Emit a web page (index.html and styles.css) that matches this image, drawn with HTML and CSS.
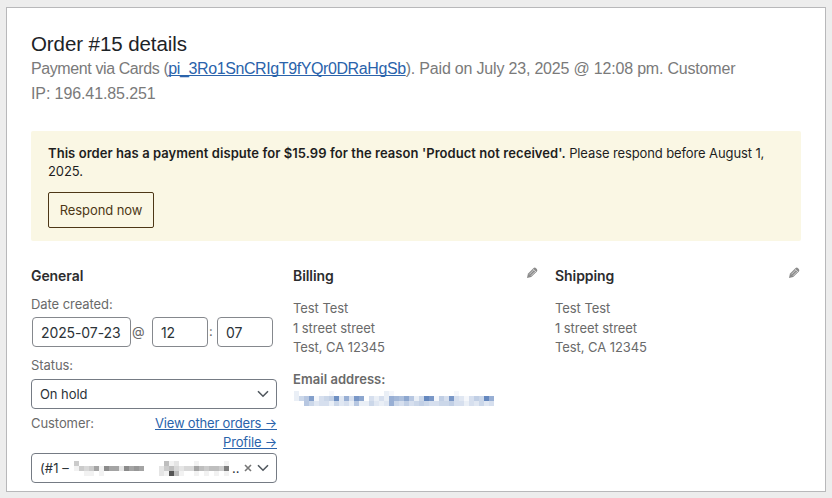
FILE: index.html
```
<!DOCTYPE html>
<html lang="en">
<head>
    <meta charset="UTF-8">
    <meta name="viewport" content="width=device-width, initial-scale=1.0">
    <title>Order #15 details</title>
    <link rel="stylesheet" href="styles.css">
</head>
<body>
<div class="panel">
    <h2 class="order-title">Order #15 details</h2>
    <p class="order-meta"><span class="meta-line">Payment via Cards (<a href="#">pi_3Ro1SnCRIgT9fYQr0DRaHgSb</a><span class="meta-paid">). Paid on July 23, 2025 @ 12:08 pm. Customer</span></span> <span class="meta-ip">IP: 196.41.85.251</span></p>

    <div class="notice">
        <p><strong>This order has a payment dispute for $15.99 for the reason 'Product not received'.</strong> Please respond before August 1, 2025.</p>
        <button type="button" class="respond">Respond now</button>
    </div>

    <div class="columns">
        <div class="column">
            <h3>General</h3>
            <div class="label date-label">Date created:</div>
            <div class="date-row">
                <input type="text" class="date" value="2025-07-23"><span class="at">@</span>
                <input type="text" class="time" value="12"><span class="colon">:</span>
                <input type="text" class="time" value="07">
            </div>
            <div class="label status-label">Status:</div>
            <div class="select">
                <span>On hold</span>
                <svg class="chevron" viewBox="0 0 12 8"><path d="M1 1.2l5 5 5-5"/></svg>
            </div>
            <div class="customer-row">
                <span class="label">Customer:</span>
                <span class="links"><a href="#">View other orders →</a><a href="#">Profile →</a></span>
            </div>
            <div class="select customer">
                <span class="customer-id">(#1 –</span>
                <span class="mosaic" data-color="60,60,60" data-rows="4000000000000000005120001000001 143471977297870002453233754554a 0011010000000000021d51001010101"></span>
                <span class="dots">..</span>
                <svg class="clear" viewBox="0 0 8 8"><path d="M1 1l6 6M7 1L1 7"/></svg>
                <svg class="chevron" viewBox="0 0 12 8"><path d="M1 1.2l5 5 5-5"/></svg>
            </div>
        </div>

        <div class="column">
            <div class="column-head">
                <h3>Billing</h3>
                <svg class="pencil" viewBox="0 0 12 12"><path d="M1 11l.9-4.2L7.6 1.1Q8.8.1 10 1.2l.8.8q1.1 1.2.1 2.4L5.2 10.1z"/><path class="groove" d="M3.3 7.4l4.4-4.4M4.9 8.8l4.4-4.4M7.2 2.1l2.9 2.9"/></svg>
            </div>
            <p class="address">Test Test<br>1 street street<br>Test, CA 12345</p>
            <div class="label email-label">Email address:</div>
            <div class="mosaic email" data-color="100,135,190" data-rows="2000000100000000002100000000000010000000 257c1456e3a4db04242a98b725fd164d431465fa 0075344253427225323a54645654455644243534"></div>
        </div>

        <div class="column">
            <div class="column-head">
                <h3>Shipping</h3>
                <svg class="pencil" viewBox="0 0 12 12"><path d="M1 11l.9-4.2L7.6 1.1Q8.8.1 10 1.2l.8.8q1.1 1.2.1 2.4L5.2 10.1z"/><path class="groove" d="M3.3 7.4l4.4-4.4M4.9 8.8l4.4-4.4M7.2 2.1l2.9 2.9"/></svg>
            </div>
            <p class="address">Test Test<br>1 street street<br>Test, CA 12345</p>
        </div>
    </div>
</div>
<script src="mosaic.js"></script>
</body>
</html>
```
FILE: styles.css
```
* {
    box-sizing: border-box;
}

body {
    margin: 0;
    padding: 7px 6px 6px;
    height: 498px;
    overflow: hidden;
    background-color: #ededed;
    font-family: Inter, sans-serif;
    font-size: 13px;
    letter-spacing: -0.07px;
    color: #6a6a6a;
}

h2, h3, p {
    margin: 0;
}

a {
    color: #2a63ab;
    text-decoration: underline;
}

.panel {
    width: 820px;
    height: 485px;
    padding: 23px 24px 0;
    background-color: #fff;
    border: 1px solid #b8b8ba;
}

.order-title {
    font-family: "Liberation Sans", Arial, sans-serif;
    font-size: 20.5px;
    font-weight: 400;
    line-height: 25px;
    letter-spacing: -0.08px;
    color: #1d2327;
}

.order-meta {
    font-family: "Liberation Sans", Arial, sans-serif;
    font-size: 16px;
    line-height: 25px;
    letter-spacing: -0.4px;
    color: #7a7a7a;
}

.order-meta a {
    text-decoration-thickness: 1px;
    text-decoration-skip-ink: none;
}

.meta-line,
.meta-ip {
    display: block;
    white-space: nowrap;
}

.meta-paid {
    letter-spacing: -0.19px;
}

.meta-ip {
    letter-spacing: -0.1px;
}

.notice {
    height: 110px;
    margin-top: 25px;
    padding: 13px 17px;
    background-color: #faf7e4;
    border-radius: 2px;
    color: #1e1e1e;
    line-height: 18px;
    letter-spacing: -0.11px;
}

.notice strong {
    font-weight: 600;
    letter-spacing: 0.06px;
}

.respond {
    display: block;
    width: 106px;
    height: 36px;
    margin-top: 12px;
    padding: 0;
    background: none;
    border: 1px solid #4d3716;
    border-radius: 2px;
    font-family: inherit;
    font-size: 13px;
    letter-spacing: -0.1px;
    color: #4d3716;
}

.columns {
    display: grid;
    grid-template-columns: repeat(3, 246px);
    gap: 16px;
    margin-top: 25px;
}

.column-head {
    display: flex;
    justify-content: space-between;
}

h3 {
    font-size: 14px;
    font-weight: 600;
    line-height: 20px;
    color: #2c2c2e;
}

.label {
    line-height: 19px;
}

.date-label {
    margin-top: 9px;
}

.date-row {
    display: flex;
    margin: 3px 0 0 1px;
    line-height: 28px;
}

.date-row input {
    height: 30px;
    padding: 0 8px;
    border: 1px solid #85888d;
    border-radius: 4px;
    font-family: inherit;
    font-size: 14px;
    letter-spacing: -0.1px;
    color: #2c3338;
}

.date-row .date {
    width: 99px;
}

.date-row .time {
    width: 56px;
}

.at {
    width: 21px;
    padding-left: 1px;
}

.colon {
    width: 9px;
    padding-left: 1px;
}

.status-label {
    margin-top: 9px;
}

.select {
    display: flex;
    align-items: center;
    height: 30px;
    margin-top: 4px;
    padding: 0 7px 0 8px;
    border: 1px solid #757b84;
    border-radius: 4px;
    color: #2c3338;
}

.chevron {
    width: 12px;
    height: 8px;
    margin-left: auto;
    fill: none;
    stroke: #50575e;
    stroke-width: 1.6;
}

.customer-row {
    display: flex;
    justify-content: space-between;
    margin-top: 5px;
}

.links {
    display: flex;
    flex-direction: column;
    align-items: flex-end;
    line-height: 19px;
    letter-spacing: -0.18px;
}

.customer {
    margin-top: 1px;
}

.customer-id {
    width: 34px;
    letter-spacing: 0.1px;
}

.customer .mosaic {
    margin-top: 1px;
}

.dots {
    margin-left: 3px;
}

.clear {
    width: 8px;
    height: 8px;
    margin-left: 5px;
    fill: none;
    stroke: #777;
    stroke-width: 1.6;
}

.pencil {
    width: 12px;
    height: 12px;
    margin: 1px 1px 0 0;
    fill: #8a8a8a;
}

.pencil .groove {
    fill: none;
    stroke: #fff;
    stroke-width: 0.6;
}

.address {
    margin-top: 13px;
    line-height: 19.5px;
}

.email-label {
    margin-top: 12px;
    font-weight: 600;
    letter-spacing: 0.05px;
}

.email {
    margin: 2.5px 0 0 1px;
}

/* masked text, drawn as a grid of 5px blocks */
.mosaic {
    display: flex;
    flex-direction: column;
}

.mosaic-row {
    display: flex;
}

.mosaic-row i {
    width: 5px;
    height: 5px;
}
```
FILE: mosaic.js
```
// Each digit in data-rows is the strength (0-f) of one block.
document.querySelectorAll('.mosaic').forEach((box) => {
    box.dataset.rows.split(' ').forEach((row) => {
        const line = document.createElement('span');
        line.className = 'mosaic-row';
        for (const digit of row) {
            const cell = document.createElement('i');
            cell.style.backgroundColor = `rgba(${box.dataset.color}, ${parseInt(digit, 16) / 15})`;
            line.appendChild(cell);
        }
        box.appendChild(line);
    });
});
```
